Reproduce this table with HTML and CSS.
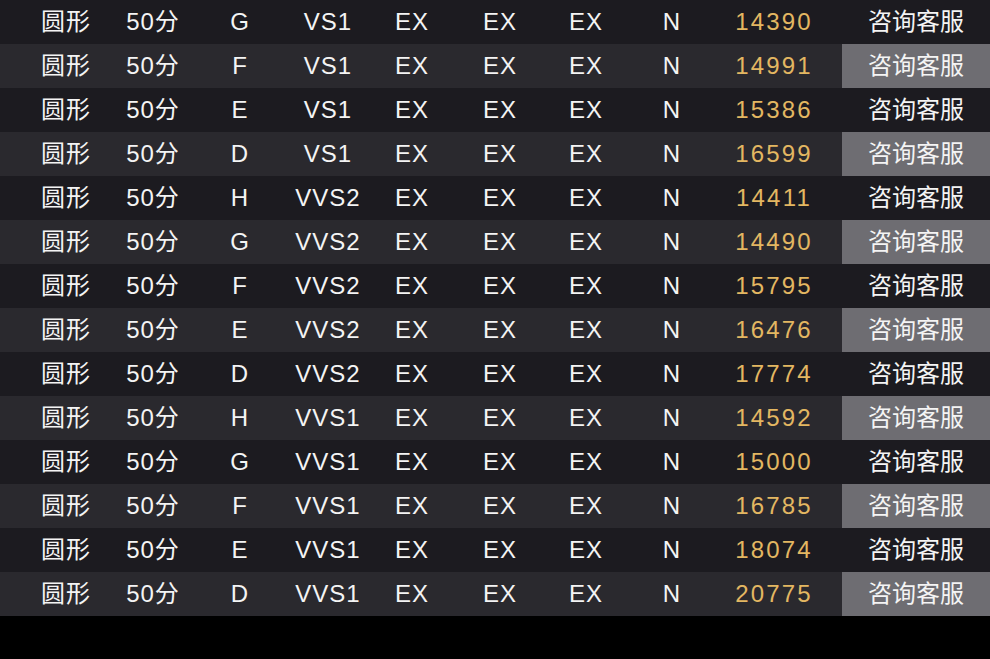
FILE: index.html
```html
<!DOCTYPE html>
<html lang="zh">
<head>
<meta charset="utf-8">
<title>钻石价格表</title>
<link rel="stylesheet" href="styles.css">
</head>
<body>
<div class="table">
  <div class="row"><div class="c">圆形</div><div class="c">50分</div><div class="c">G</div><div class="c">VS1</div><div class="c">EX</div><div class="c">EX</div><div class="c">EX</div><div class="c">N</div><div class="c price">14390</div><div class="c btn">咨询客服</div></div>
  <div class="row"><div class="c">圆形</div><div class="c">50分</div><div class="c">F</div><div class="c">VS1</div><div class="c">EX</div><div class="c">EX</div><div class="c">EX</div><div class="c">N</div><div class="c price">14991</div><div class="c btn">咨询客服</div></div>
  <div class="row"><div class="c">圆形</div><div class="c">50分</div><div class="c">E</div><div class="c">VS1</div><div class="c">EX</div><div class="c">EX</div><div class="c">EX</div><div class="c">N</div><div class="c price">15386</div><div class="c btn">咨询客服</div></div>
  <div class="row"><div class="c">圆形</div><div class="c">50分</div><div class="c">D</div><div class="c">VS1</div><div class="c">EX</div><div class="c">EX</div><div class="c">EX</div><div class="c">N</div><div class="c price">16599</div><div class="c btn">咨询客服</div></div>
  <div class="row"><div class="c">圆形</div><div class="c">50分</div><div class="c">H</div><div class="c">VVS2</div><div class="c">EX</div><div class="c">EX</div><div class="c">EX</div><div class="c">N</div><div class="c price">14411</div><div class="c btn">咨询客服</div></div>
  <div class="row"><div class="c">圆形</div><div class="c">50分</div><div class="c">G</div><div class="c">VVS2</div><div class="c">EX</div><div class="c">EX</div><div class="c">EX</div><div class="c">N</div><div class="c price">14490</div><div class="c btn">咨询客服</div></div>
  <div class="row"><div class="c">圆形</div><div class="c">50分</div><div class="c">F</div><div class="c">VVS2</div><div class="c">EX</div><div class="c">EX</div><div class="c">EX</div><div class="c">N</div><div class="c price">15795</div><div class="c btn">咨询客服</div></div>
  <div class="row"><div class="c">圆形</div><div class="c">50分</div><div class="c">E</div><div class="c">VVS2</div><div class="c">EX</div><div class="c">EX</div><div class="c">EX</div><div class="c">N</div><div class="c price">16476</div><div class="c btn">咨询客服</div></div>
  <div class="row"><div class="c">圆形</div><div class="c">50分</div><div class="c">D</div><div class="c">VVS2</div><div class="c">EX</div><div class="c">EX</div><div class="c">EX</div><div class="c">N</div><div class="c price">17774</div><div class="c btn">咨询客服</div></div>
  <div class="row"><div class="c">圆形</div><div class="c">50分</div><div class="c">H</div><div class="c">VVS1</div><div class="c">EX</div><div class="c">EX</div><div class="c">EX</div><div class="c">N</div><div class="c price">14592</div><div class="c btn">咨询客服</div></div>
  <div class="row"><div class="c">圆形</div><div class="c">50分</div><div class="c">G</div><div class="c">VVS1</div><div class="c">EX</div><div class="c">EX</div><div class="c">EX</div><div class="c">N</div><div class="c price">15000</div><div class="c btn">咨询客服</div></div>
  <div class="row"><div class="c">圆形</div><div class="c">50分</div><div class="c">F</div><div class="c">VVS1</div><div class="c">EX</div><div class="c">EX</div><div class="c">EX</div><div class="c">N</div><div class="c price">16785</div><div class="c btn">咨询客服</div></div>
  <div class="row"><div class="c">圆形</div><div class="c">50分</div><div class="c">E</div><div class="c">VVS1</div><div class="c">EX</div><div class="c">EX</div><div class="c">EX</div><div class="c">N</div><div class="c price">18074</div><div class="c btn">咨询客服</div></div>
  <div class="row"><div class="c">圆形</div><div class="c">50分</div><div class="c">D</div><div class="c">VVS1</div><div class="c">EX</div><div class="c">EX</div><div class="c">EX</div><div class="c">N</div><div class="c price">20775</div><div class="c btn">咨询客服</div></div>
</div>
</body>
</html>
```

FILE: styles.css
```css
html, body {
  margin: 0;
  padding: 0;
  background: #000;
}
body {
  width: 990px;
  height: 659px;
  overflow: hidden;
  font-family: "Liberation Sans", "Noto Sans CJK SC", sans-serif;
  font-size: 24px;
  color: #f4f4f4;
}
.table {
  display: flex;
  flex-direction: column;
}
.row {
  display: grid;
  grid-template-columns: 116px 58px 116px 60px 108px 68px 104px 68px 136px 148px;
  padding-left: 8px;
  height: 44px;
  background: #1c1b20;
}
.row:nth-child(even) {
  background: #2a292e;
}
.c {
  display: flex;
  align-items: center;
  justify-content: center;
  white-space: nowrap;
  line-height: 24px;
  letter-spacing: 1px;
}
.price {
  color: #e3b762;
  letter-spacing: 2.2px;
}
.row:nth-child(even) .btn {
  background: #6e6d72;
}
.btn {
  letter-spacing: 0;
}
```
